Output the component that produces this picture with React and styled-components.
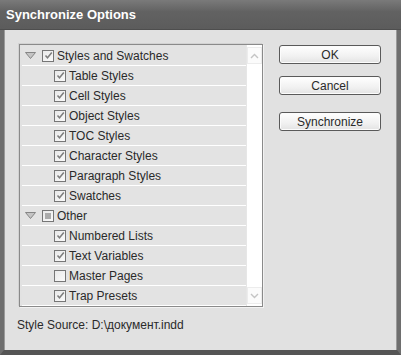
import styled, { createGlobalStyle } from 'styled-components'

const ITEMS = [
  { label: 'Styles and Swatches', level: 0, state: 'checked' },
  { label: 'Table Styles', level: 1, state: 'checked' },
  { label: 'Cell Styles', level: 1, state: 'checked' },
  { label: 'Object Styles', level: 1, state: 'checked' },
  { label: 'TOC Styles', level: 1, state: 'checked' },
  { label: 'Character Styles', level: 1, state: 'checked' },
  { label: 'Paragraph Styles', level: 1, state: 'checked' },
  { label: 'Swatches', level: 1, state: 'checked' },
  { label: 'Other', level: 0, state: 'mixed' },
  { label: 'Numbered Lists', level: 1, state: 'checked' },
  { label: 'Text Variables', level: 1, state: 'checked' },
  { label: 'Master Pages', level: 1, state: 'empty' },
  { label: 'Trap Presets', level: 1, state: 'checked' }
]

const GlobalStyle = createGlobalStyle`
  body {
    margin: 0;
    background: #e1e1e1;
    font-family: "Liberation Sans", Arial, sans-serif;
  }
`

function Disclosure() {
  return (
    <svg width="11" height="7" viewBox="0 0 11 7">
      <path d="M0.5 0.5 L10.5 0.5 L5.5 6.5 Z" fill="#c4c4c4" stroke="#858585" strokeWidth="1" />
    </svg>
  )
}

function CheckBox({ state }) {
  return (
    <Box>
      {state === 'checked' ? (
        <svg width="9" height="9" viewBox="0 0 9 9">
          <path d="M1.5 4.5 L3.5 6.8 L7.8 1.6" fill="none" stroke="#7d7d7d" strokeWidth="1.5" />
        </svg>
      ) : null}
      {state === 'mixed' ? <Mixed /> : null}
    </Box>
  )
}

function Chevron({ up }) {
  return (
    <svg width="9" height="6" viewBox="0 0 9 6">
      <path
        d={up ? 'M1 5 L4.5 1.5 L8 5' : 'M1 1 L4.5 4.5 L8 1'}
        fill="none"
        stroke="#c4c4c4"
        strokeWidth="1.4"
      />
    </svg>
  )
}

export default function App() {
  return (
    <Window>
      <GlobalStyle />
      <TitleBar>Synchronize Options</TitleBar>
      <Body>
        <Main>
          <ListBox>
            <Rows>
              {ITEMS.map((item) => (
                <Row key={item.label} $level={item.level}>
                  {item.level === 0 ? (
                    <Toggle>
                      <Disclosure />
                    </Toggle>
                  ) : null}
                  <CheckBox state={item.state} />
                  <Label>{item.label}</Label>
                </Row>
              ))}
            </Rows>
            <ScrollBar>
              <ScrollButton>
                <Chevron up />
              </ScrollButton>
              <ScrollButton>
                <Chevron />
              </ScrollButton>
            </ScrollBar>
          </ListBox>
          <Buttons>
            <Button>OK</Button>
            <Button>Cancel</Button>
            <Button $gap>Synchronize</Button>
          </Buttons>
        </Main>
        <Source>Style Source: D:\документ.indd</Source>
      </Body>
    </Window>
  )
}

const Window = styled.div`
  width: 401px;
  height: 355px;
  box-sizing: border-box;
  display: flex;
  flex-direction: column;
  background: #e1e1e1;
  border-left: 4px solid #6e6e6e;
  border-right: 4px solid #6e6e6e;
  border-bottom: 5px solid #555555;
  box-shadow: inset 1px 0 0 #9a9a9a, inset -1px 0 0 #9a9a9a;
`

const TitleBar = styled.div`
  height: 29px;
  margin: 0 -4px;
  padding: 0 6px;
  display: flex;
  align-items: center;
  background: linear-gradient(#7a7a7a, #626262 40%, #5c5c5c);
  border-bottom: 1px solid #4e4e4e;
  color: #ffffff;
  font-size: 13px;
  font-weight: 700;
`

const Body = styled.div`
  flex: 1;
  padding: 14px 15px 0 15px;
  display: flex;
  flex-direction: column;
`

const Main = styled.div`
  display: flex;
  align-items: flex-start;
  gap: 16px;
`

const ListBox = styled.div`
  width: 244px;
  height: 263px;
  box-sizing: border-box;
  display: flex;
  border: 1px solid #8a8a8a;
  box-shadow: 1px 1px 0 #f2f2f2, -1px -1px 0 #d2d2d2;
  background: #e2e2e2;
`

const Rows = styled.div`
  flex: 1;
  padding: 1px 0 0 2px;
  display: flex;
  flex-direction: column;
`

const Row = styled.div`
  height: 19px;
  display: flex;
  align-items: center;
  gap: 3px;
  padding-left: ${(props) => (props.$level === 0 ? '3px' : '32px')};
  border-bottom: 1px solid #ffffff;
  background: #e3e3e3;
`

const Toggle = styled.span`
  width: 11px;
  height: 19px;
  display: flex;
  align-items: center;
  margin-right: 3px;
`

const Box = styled.span`
  width: 12px;
  height: 12px;
  box-sizing: border-box;
  display: flex;
  align-items: center;
  justify-content: center;
  border: 1px solid #767676;
  background: linear-gradient(135deg, #e9e9e9, #fafafa);
  flex-shrink: 0;
`

const Mixed = styled.span`
  width: 6px;
  height: 6px;
  background: #ababab;
`

const Label = styled.span`
  color: #2a2a2a;
  font-size: 12px;
  white-space: nowrap;
`

const ScrollBar = styled.div`
  width: 15px;
  display: flex;
  flex-direction: column;
  justify-content: space-between;
  padding: 2px 0;
  background: #ffffff;
  border-left: 1px solid #e6e6e6;
`

const ScrollButton = styled.div`
  height: 15px;
  display: flex;
  align-items: center;
  justify-content: center;
  border: 1px solid #ececec;
  background: #fbfbfb;
`

const Buttons = styled.div`
  display: flex;
  flex-direction: column;
  gap: 12px;
  padding-top: 1px;
`

const Button = styled.div`
  width: 102px;
  height: 19px;
  box-sizing: border-box;
  margin-top: ${(props) => (props.$gap ? '5px' : '0')};
  display: flex;
  align-items: center;
  justify-content: center;
  border: 1px solid #5a5a5a;
  border-radius: 3px;
  background: linear-gradient(#ffffff, #f1f1f1 60%, #e3e3e3);
  box-shadow: inset 0 0 0 1px #fcfcfc;
  color: #2a2a2a;
  font-size: 12px;
`

const Source = styled.div`
  margin: 11px 0 0 -2px;
  color: #2a2a2a;
  font-size: 12px;
`
